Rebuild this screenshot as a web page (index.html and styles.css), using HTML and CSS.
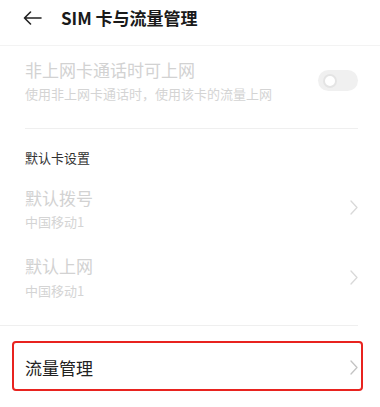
FILE: index.html
```html
<!DOCTYPE html>
<html lang="zh-CN">
<head>
<meta charset="utf-8">
<link rel="stylesheet" href="styles.css">
</head>
<body>
<div class="page">
  <header class="header">
    <div class="header-bar">
      <svg class="back" width="19" height="14" viewBox="0 0 19 14"><path d="M18 7H1.5M7.5 1L1.5 7L7.5 13" fill="none" stroke="#222" stroke-width="1.6" stroke-linecap="round" stroke-linejoin="round"/></svg>
      <span class="title">SIM 卡与流量管理</span>
    </div>
  </header>

  <div class="row row-first">
    <div class="texts">
      <div class="main disabled">非上网卡通话时可上网</div>
      <div class="sub">使用非上网卡通话时，使用该卡的流量上网</div>
    </div>
    <div class="toggle"><span class="knob"></span></div>
  </div>

  <div class="section-title">默认卡设置</div>

  <div class="row row-dial">
    <div class="texts">
      <div class="main disabled">默认拨号</div>
      <div class="sub">中国移动1</div>
    </div>
    <svg class="chev" width="8" height="15" viewBox="0 0 8 15"><path d="M1 1L7 7.5L1 14" fill="none" stroke="#d9d9d9" stroke-width="1.3" stroke-linecap="round" stroke-linejoin="round"/></svg>
  </div>

  <div class="row row-net">
    <div class="texts">
      <div class="main disabled">默认上网</div>
      <div class="sub">中国移动1</div>
    </div>
    <svg class="chev" width="8" height="15" viewBox="0 0 8 15"><path d="M1 1L7 7.5L1 14" fill="none" stroke="#d9d9d9" stroke-width="1.3" stroke-linecap="round" stroke-linejoin="round"/></svg>
  </div>

  <div class="row highlight">
    <div class="main strong">流量管理</div>
    <svg class="chev" width="8" height="15" viewBox="0 0 8 15"><path d="M1 1L7 7.5L1 14" fill="none" stroke="#c4c4c4" stroke-width="1.3" stroke-linecap="round" stroke-linejoin="round"/></svg>
  </div>
</div>
</body>
</html>
```

FILE: styles.css
```css
html, body {
  margin: 0;
  padding: 0;
  background: #ffffff;
}
body {
  font-family: "Noto Sans CJK SC", "Noto Sans", sans-serif;
  width: 380px;
  height: 407px;
  overflow: hidden;
}
.page {
  display: flex;
  flex-direction: column;
}
.header {
  height: 45px;
  border-bottom: 1px solid #f3f3f3;
}
.header-bar {
  height: 36px;
  display: flex;
  align-items: center;
  padding-left: 23px;
}
.back {
  display: block;
  margin-right: 19px;
}
.title {
  font-size: 17px;
  font-weight: 700;
  color: #1a1a1a;
  line-height: 36px;
}
.row {
  display: flex;
  align-items: center;
  justify-content: space-between;
  padding-left: 25px;
  padding-right: 22px;
}
.texts {
  display: flex;
  flex-direction: column;
}
.main {
  font-size: 17px;
  line-height: 24px;
}
.disabled {
  color: #d2d2d2;
}
.strong {
  color: #222222;
}
.sub {
  font-size: 13px;
  line-height: 20px;
  color: #d4d4d4;
  margin-top: 2px;
}
.row-first {
  margin: 12px 22px 0 25px;
  padding: 0 0 24px 0;
  border-bottom: 1px solid #efefef;
}
.toggle {
  width: 40px;
  height: 21px;
  border-radius: 11px;
  background: #f0f0f0;
  position: relative;
  margin-bottom: 2px;
}
.knob {
  position: absolute;
  left: 5px;
  top: 4px;
  width: 10px;
  height: 10px;
  border-radius: 50%;
  background: #ffffff;
  border: 2px solid #e4e4e4;
}
.section-title {
  font-size: 13px;
  line-height: 20px;
  color: #333333;
  padding-left: 25px;
  margin-top: 19px;
}
.row-dial {
  margin-top: 18px;
}
.row-net {
  margin: 22px 22px 0 0;
  padding-right: 0;
  padding-bottom: 24px;
  border-bottom: 1px solid #efefef;
}
.row-net .sub {
  margin-top: 3px;
}
.chev {
  display: block;
  margin-top: -3px;
}
.row-net .chev {
  margin-top: 0;
}
.highlight {
  margin: 15px 17px 0 12px;
  height: 46px;
  border: 2px solid #e8231f;
  border-radius: 4px;
  padding-left: 11px;
  padding-right: 3px;
}
.highlight .main {
  margin-top: 3px;
}
.highlight .chev {
  margin-top: 2px;
}
```
